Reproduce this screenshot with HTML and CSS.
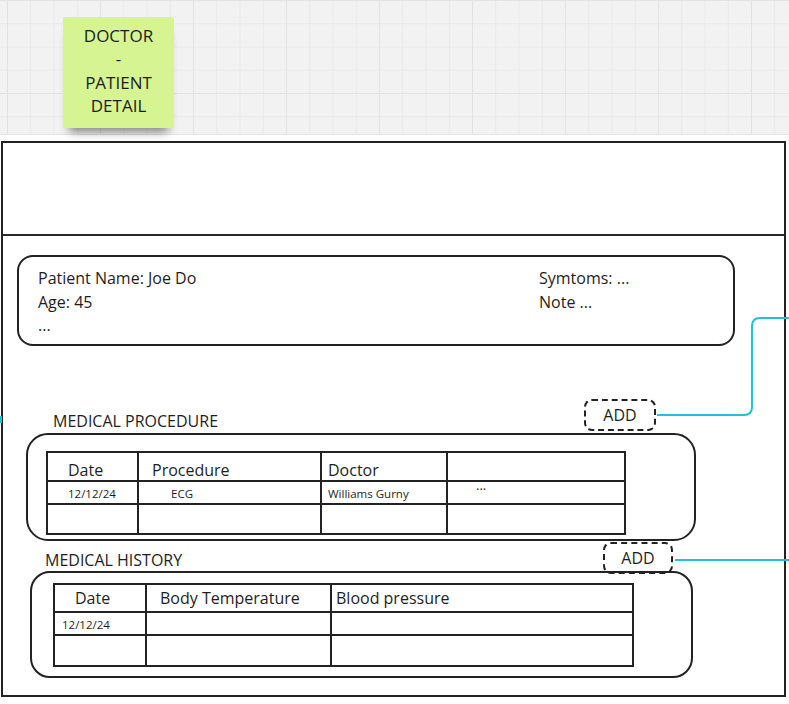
FILE: index.html
```html
<!DOCTYPE html>
<html>
    <head>
        <link rel="stylesheet" href="styles.css">
    </head>
    <body>
        <div class="board">
            <div class="sticky">DOCTOR<br>-<br>PATIENT<br>DETAIL</div>
        </div>
        <div class="frame">
            <div class="top"></div>
            <div class="patient">
                <div class="col">
                    <div>Patient Name: Joe Do</div>
                    <div>Age: 45</div>
                    <div>...</div>
                </div>
                <div class="col">
                    <div>Symtoms: ...</div>
                    <div>Note ...</div>
                </div>
            </div>

            <div class="section proc">
                <div class="head">
                    <span class="title">MEDICAL PROCEDURE</span>
                    <span class="add">ADD</span>
                </div>
                <div class="box">
                    <table class="grid">
                        <colgroup>
                            <col style="width:91px">
                            <col style="width:183px">
                            <col style="width:126px">
                            <col style="width:178px">
                        </colgroup>
                        <tr class="h">
                            <td class="p20">Date</td>
                            <td class="p15">Procedure</td>
                            <td class="p8">Doctor</td>
                            <td></td>
                        </tr>
                        <tr class="r">
                            <td class="p20 sm">12/12/24</td>
                            <td class="p32 sm">ECG</td>
                            <td class="p8 sm">Williams Gurny</td>
                            <td class="p30 sm dots">...</td>
                        </tr>
                        <tr class="e">
                            <td></td><td></td><td></td><td></td>
                        </tr>
                    </table>
                </div>
            </div>

            <div class="section hist">
                <div class="head">
                    <span class="title">MEDICAL HISTORY</span>
                    <span class="add">ADD</span>
                </div>
                <div class="box">
                    <table class="grid">
                        <colgroup>
                            <col style="width:92px">
                            <col style="width:185px">
                            <col style="width:302px">
                        </colgroup>
                        <tr class="h">
                            <td class="p22">Date</td>
                            <td class="p15">Body Temperature</td>
                            <td class="p6">Blood pressure</td>
                        </tr>
                        <tr class="r">
                            <td class="p9 sm">12/12/24</td>
                            <td></td>
                            <td></td>
                        </tr>
                        <tr class="e">
                            <td></td><td></td><td></td>
                        </tr>
                    </table>
                </div>
            </div>
        </div>

        <!-- connectors drawn over the frame -->
        <svg class="links" width="789" height="704" viewBox="0 0 789 704">
            <path d="M657 415 H744 Q752 415 752 407 V326 Q752 318 760 318 H789" />
            <path d="M675 560 H789" />
            <path d="M1 416 V423" />
        </svg>
    </body>
</html>
```

FILE: styles.css
```css
body{
    margin:0;
    background:#fff;
    font-family:"Open Sans", "Liberation Sans", sans-serif;
    color:#1e1e1e;
    position:relative;
    width:789px;
    height:704px;
    overflow:hidden;
}
.board{
    height:135px;
    padding-top:17px;
    box-sizing:border-box;
    background-color:#f2f2f2;
    background-image:
        linear-gradient(to right, #e2e2e2 1px, transparent 1px),
        linear-gradient(to bottom, #e2e2e2 1px, transparent 1px),
        linear-gradient(to right, #e9e9e9 1px, transparent 1px),
        linear-gradient(to bottom, #e9e9e9 1px, transparent 1px);
    background-size:93px 93px, 93px 93px, 23.25px 23.25px, 23.25px 23.25px;
    background-position:7px 0, 0 0, 7px 0, 0 0;
    border-bottom:1px solid #e6e6e6;
}
.sticky{
    width:111px;
    height:111px;
    margin-left:63px;
    box-sizing:border-box;
    padding-top:7px;
    background:#d6f592;
    text-align:center;
    font-size:17px;
    line-height:23.3px;
    color:#1c1c1c;
    box-shadow:0 10px 9px -6px rgba(0,0,0,0.45);
}
.frame{
    margin-top:6px;
    margin-left:1px;
    width:785px;
    height:556px;
    box-sizing:border-box;
    border:2px solid #222;
}
.top{
    height:91px;
    border-bottom:2px solid #2a2a2a;
}
.patient{
    margin:19px 0 0 14px;
    width:718px;
    height:91px;
    box-sizing:border-box;
    border:2px solid #222;
    border-radius:16px;
    padding:10px 0 0 19px;
    display:grid;
    grid-template-columns:501px 1fr;
    font-size:16px;
    line-height:23.5px;
}
.section .head{
    display:flex;
    justify-content:space-between;
    align-items:flex-end;
}
.title{
    font-size:16px;
    line-height:20px;
}
.add{
    height:32px;
    box-sizing:border-box;
    border:2px dashed #222;
    border-radius:8px;
    font-size:16px;
    line-height:28px;
    text-align:center;
}
.box{
    box-sizing:border-box;
    border:2px solid #222;
}
.proc{
    margin:53px 0 0 23px;
    width:670px;
}
.proc .title{ padding-left:27px; }
.proc .add{ width:72px; margin-right:40px; }
.proc .box{
    margin-top:2px;
    height:108px;
    border-radius:22px;
    padding:16px 0 0 18px;
}
.hist{
    margin:1px 0 0 27px;
    width:663px;
}
.hist .title{ padding-left:15px; padding-bottom:4px; }
.hist .add{ width:70px; margin-right:20px; }
.hist .box{
    margin-top:-3px;
    height:107px;
    border-radius:20px;
    padding:10px 0 0 21px;
}
.grid{
    border-collapse:collapse;
    border:2px solid #222;
    table-layout:fixed;
}
.grid td{
    border:2px solid #222;
    padding:0;
    font-size:16px;
    white-space:nowrap;
    overflow:hidden;
}
.proc .grid{ width:578px; }
.proc .h td{ height:27px; vertical-align:bottom; line-height:20px; }
.proc .r td{ height:19px; }
.proc .e td{ height:28px; }

.hist .grid{ width:579px; }
.hist .h td{ height:26px; line-height:20px; }
.hist .r td{ height:19px; }
.hist .e td{ height:29px; }

.grid td.sm{
    font-size:11.5px;
    line-height:14px;
    vertical-align:middle;
    padding-top:2px;
}
.grid td.dots{
    vertical-align:top;
    padding-top:0;
    font-size:13px;
    line-height:7px;
    overflow:visible;
}
.grid td.p6{ padding-left:4px; }
.grid td.p8{ padding-left:6px; }
.grid td.p9{ padding-left:7px; }
.grid td.p15{ padding-left:13px; }
.grid td.p20{ padding-left:20px; }
.grid td.p22{ padding-left:20px; }
.grid td.p30{ padding-left:28px; }
.grid td.p32{ padding-left:32px; }

.links{
    position:absolute;
    top:0;
    left:0;
    pointer-events:none;
}
.links path{
    fill:none;
    stroke:#1fc3d3;
    stroke-width:2;
}
```
